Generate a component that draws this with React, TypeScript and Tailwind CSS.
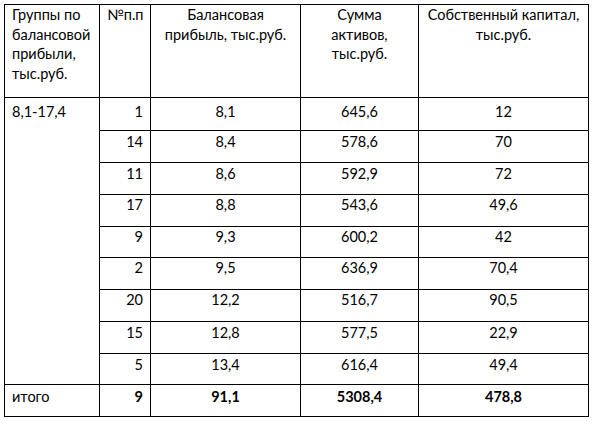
const rows = [
  { n: "1", p: "8,1", a: "645,6", k: "12", h: "h-[33px]", pt: "pt-[4px]" },
  { n: "14", p: "8,4", a: "578,6", k: "70", h: "h-[32px]", pt: "pt-[1px]" },
  { n: "11", p: "8,6", a: "592,9", k: "72", h: "h-[32px]", pt: "pt-[1px]" },
  { n: "17", p: "8,8", a: "543,6", k: "49,6", h: "h-[32px]", pt: "pt-0" },
  { n: "9", p: "9,3", a: "600,2", k: "42", h: "h-[31px]", pt: "pt-0" },
  { n: "2", p: "9,5", a: "636,9", k: "70,4", h: "h-[32px]", pt: "pt-0" },
  { n: "20", p: "12,2", a: "516,7", k: "90,5", h: "h-[32px]", pt: "pt-0" },
  { n: "15", p: "12,8", a: "577,5", k: "22,9", h: "h-[32px]", pt: "pt-[1px]" },
  { n: "5", p: "13,4", a: "616,4", k: "49,4", h: "h-[31px]", pt: "pt-[1px]" },
]

const cell = "border border-black align-top leading-[19.5px]"

export default function App() {
  return (
    <div className="w-[593px] h-[424px] bg-white pt-[4px] pl-[4px] text-black font-['Lato',sans-serif] text-[14.5px]">
      <table className="border-collapse table-fixed w-[584px]">
        <colgroup>
          <col className="w-[95px]" />
          <col className="w-[51px]" />
          <col className="w-[150px]" />
          <col className="w-[118px]" />
          <col className="w-[170px]" />
        </colgroup>
        <thead>
          <tr className="h-[93px]">
            <th className="border border-black align-top font-normal text-left px-[7px] pt-0 leading-[19.5px]">
              Группы по балансовой прибыли, тыс.руб.
            </th>
            <th className="border border-black align-top font-normal text-left px-[7px] pt-0 leading-[19.5px]">
              №п.п
            </th>
            <th className="border border-black align-top font-normal text-center px-[7px] pt-0 leading-[19.5px]">
              Балансовая прибыль, тыс.руб.
            </th>
            <th className="border border-black align-top font-normal text-center px-[14px] pt-0 leading-[19.5px]">
              Сумма активов, тыс.руб.
            </th>
            <th className="border border-black align-top font-normal text-center px-[4px] pt-0 leading-[19.5px]">
              Собственный капитал, тыс.руб.
            </th>
          </tr>
        </thead>
        <tbody>
          {rows.map((r, i) => (
            <tr key={i} className={r.h}>
              {i === 0 && (
                <td rowSpan={9} className={`${cell} pt-[4px] px-[7px]`}>
                  8,1-17,4
                </td>
              )}
              <td className={`${cell} ${r.pt} text-right px-[7px]`}>{r.n}</td>
              <td className={`${cell} ${r.pt} text-center`}>{r.p}</td>
              <td className={`${cell} ${r.pt} text-center`}>{r.a}</td>
              <td className={`${cell} ${r.pt} text-center`}>{r.k}</td>
            </tr>
          ))}
          <tr className="h-[32px]">
            <td className={`${cell} pt-[2px] px-[7px]`}>итого</td>
            <td className={`${cell} pt-[2px] text-right px-[7px] font-bold`}>9</td>
            <td className={`${cell} pt-[2px] text-center font-bold`}>91,1</td>
            <td className={`${cell} pt-[2px] text-center font-bold`}>5308,4</td>
            <td className={`${cell} pt-[2px] text-center font-bold`}>478,8</td>
          </tr>
        </tbody>
      </table>
    </div>
  )
}
